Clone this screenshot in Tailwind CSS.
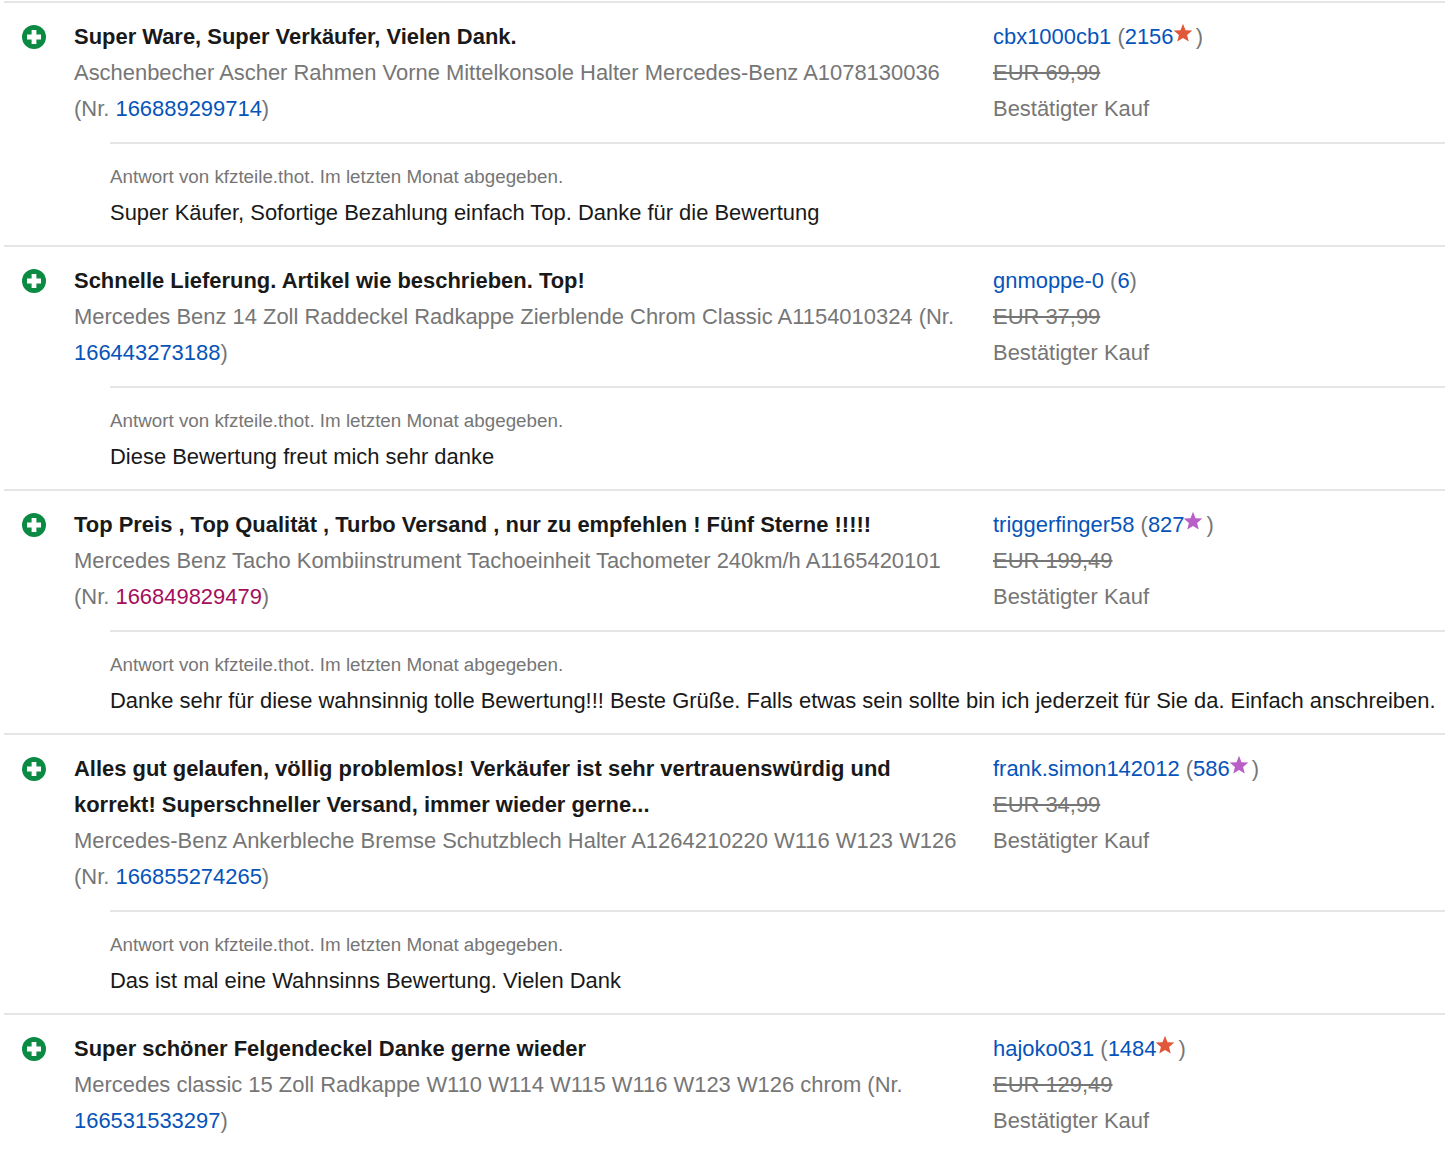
<!DOCTYPE html>
<html>
<head>
<meta charset="utf-8">
<script src="https://cdn.jsdelivr.net/npm/@tailwindcss/browser@4"></script>
</head>
<body class="bg-white">
<div class="pl-1 pt-[1px] font-['Liberation_Sans',Arial,sans-serif] text-[21.95px] leading-[36px] text-[#767676] overflow-hidden h-[1153px]">

<section class="border-t-2 border-[#e5e5e5] pt-4">
  <div class="flex">
    <div class="w-[70px] shrink-0 pl-[18px] pt-[6px]">
      <svg class="w-6 h-6" viewBox="0 0 24 24"><circle cx="12" cy="12" r="12" fill="#0a8a43"/><path d="M9.6 5h4.8v4.6H19v4.8h-4.6V19H9.6v-4.6H5V9.6h4.600z" fill="#fff"/></svg>
    </div>
    <div class="w-[893px] shrink-0 pr-2">
      <div class="font-bold text-[#191919]">Super Ware, Super Verkäufer, Vielen Dank.</div>
      <div>Aschenbecher Ascher Rahmen Vorne Mittelkonsole Halter Mercedes-Benz A1078130036 (Nr.&nbsp;<a class="text-[#0654ba]">166889299714</a>)</div>
    </div>
    <div class="flex-1 min-w-0 whitespace-nowrap pl-[26px]">
      <div><a class="text-[#0654ba]">cbx1000cb1</a> (<a class="text-[#0654ba]">2156</a><svg class="inline-block align-top w-5 h-5 mt-1 -ml-px -mr-[3px]" viewBox="0 0 24 24"><path d="M12 1l3 7.6 8.2.5-6.3 5.2 2 8L12 17.900l-6.900 4.400 2-8L.8 9.100 9 8.600z" fill="#e0573a"/></svg> )</div>
      <div class="line-through">EUR 69,99</div>
      <div>Bestätigter Kauf</div>
    </div>
  </div>
  <div class="ml-[106px] mt-[15px] border-t-2 border-[#e5e5e5] pt-[15px] pb-[14px]">
    <div class="text-[18.8px]">Antwort von kfzteile.thot. Im letzten Monat abgegeben.</div>
    <div class="text-[#191919] whitespace-nowrap">Super Käufer, Sofortige Bezahlung einfach Top. Danke für die Bewertung</div>
  </div>
</section>

<section class="border-t-2 border-[#e5e5e5] pt-4">
  <div class="flex">
    <div class="w-[70px] shrink-0 pl-[18px] pt-[6px]">
      <svg class="w-6 h-6" viewBox="0 0 24 24"><circle cx="12" cy="12" r="12" fill="#0a8a43"/><path d="M9.6 5h4.8v4.6H19v4.8h-4.6V19H9.6v-4.6H5V9.6h4.600z" fill="#fff"/></svg>
    </div>
    <div class="w-[893px] shrink-0 pr-2">
      <div class="font-bold text-[#191919]">Schnelle Lieferung. Artikel wie beschrieben. Top!</div>
      <div>Mercedes Benz 14 Zoll Raddeckel Radkappe Zierblende Chrom Classic A1154010324 (Nr. <a class="text-[#0654ba]">166443273188</a>)</div>
    </div>
    <div class="flex-1 min-w-0 whitespace-nowrap pl-[26px]">
      <div><a class="text-[#0654ba]">gnmoppe-0</a> (<a class="text-[#0654ba]">6</a>)</div>
      <div class="line-through">EUR 37,99</div>
      <div>Bestätigter Kauf</div>
    </div>
  </div>
  <div class="ml-[106px] mt-[15px] border-t-2 border-[#e5e5e5] pt-[15px] pb-[14px]">
    <div class="text-[18.8px]">Antwort von kfzteile.thot. Im letzten Monat abgegeben.</div>
    <div class="text-[#191919] whitespace-nowrap">Diese Bewertung freut mich sehr danke</div>
  </div>
</section>

<section class="border-t-2 border-[#e5e5e5] pt-4">
  <div class="flex">
    <div class="w-[70px] shrink-0 pl-[18px] pt-[6px]">
      <svg class="w-6 h-6" viewBox="0 0 24 24"><circle cx="12" cy="12" r="12" fill="#0a8a43"/><path d="M9.6 5h4.8v4.6H19v4.8h-4.6V19H9.6v-4.6H5V9.6h4.600z" fill="#fff"/></svg>
    </div>
    <div class="w-[893px] shrink-0 pr-2">
      <div class="font-bold text-[#191919]">Top Preis , Top Qualität , Turbo Versand , nur zu empfehlen ! Fünf Sterne !!!!!</div>
      <div>Mercedes Benz Tacho Kombiinstrument Tachoeinheit Tachometer 240km/h A1165420101 (Nr.&nbsp;<a class="text-[#a50e5b]">166849829479</a>)</div>
    </div>
    <div class="flex-1 min-w-0 whitespace-nowrap pl-[26px]">
      <div><a class="text-[#0654ba]">triggerfinger58</a> (<a class="text-[#0654ba]">827</a><svg class="inline-block align-top w-5 h-5 mt-1 -ml-px -mr-[3px]" viewBox="0 0 24 24"><path d="M12 1l3 7.6 8.2.5-6.3 5.2 2 8L12 17.900l-6.900 4.400 2-8L.8 9.100 9 8.600z" fill="#b960c8"/></svg> )</div>
      <div class="line-through">EUR 199,49</div>
      <div>Bestätigter Kauf</div>
    </div>
  </div>
  <div class="ml-[106px] mt-[15px] border-t-2 border-[#e5e5e5] pt-[15px] pb-[14px]">
    <div class="text-[18.8px]">Antwort von kfzteile.thot. Im letzten Monat abgegeben.</div>
    <div class="text-[#191919] whitespace-nowrap">Danke sehr für diese wahnsinnig tolle Bewertung!!! Beste Grüße. Falls etwas sein sollte bin ich jederzeit für Sie da. Einfach anschreiben.</div>
  </div>
</section>

<section class="border-t-2 border-[#e5e5e5] pt-4">
  <div class="flex">
    <div class="w-[70px] shrink-0 pl-[18px] pt-[6px]">
      <svg class="w-6 h-6" viewBox="0 0 24 24"><circle cx="12" cy="12" r="12" fill="#0a8a43"/><path d="M9.6 5h4.8v4.6H19v4.8h-4.6V19H9.6v-4.6H5V9.6h4.600z" fill="#fff"/></svg>
    </div>
    <div class="w-[893px] shrink-0 pr-2">
      <div class="font-bold text-[#191919]">Alles gut gelaufen, völlig problemlos! Verkäufer ist sehr vertrauenswürdig und korrekt! Superschneller Versand, immer wieder gerne...</div>
      <div>Mercedes-Benz Ankerbleche Bremse Schutzblech Halter A1264210220 W116 W123 W126 (Nr.&nbsp;<a class="text-[#0654ba]">166855274265</a>)</div>
    </div>
    <div class="flex-1 min-w-0 whitespace-nowrap pl-[26px]">
      <div><a class="text-[#0654ba]">frank.simon142012</a> (<a class="text-[#0654ba]">586</a><svg class="inline-block align-top w-5 h-5 mt-1 -ml-px -mr-[3px]" viewBox="0 0 24 24"><path d="M12 1l3 7.6 8.2.5-6.3 5.2 2 8L12 17.900l-6.900 4.400 2-8L.8 9.100 9 8.600z" fill="#b960c8"/></svg> )</div>
      <div class="line-through">EUR 34,99</div>
      <div>Bestätigter Kauf</div>
    </div>
  </div>
  <div class="ml-[106px] mt-[15px] border-t-2 border-[#e5e5e5] pt-[15px] pb-[14px]">
    <div class="text-[18.8px]">Antwort von kfzteile.thot. Im letzten Monat abgegeben.</div>
    <div class="text-[#191919] whitespace-nowrap">Das ist mal eine Wahnsinns Bewertung. Vielen Dank</div>
  </div>
</section>

<section class="border-t-2 border-[#e5e5e5] pt-4">
  <div class="flex">
    <div class="w-[70px] shrink-0 pl-[18px] pt-[6px]">
      <svg class="w-6 h-6" viewBox="0 0 24 24"><circle cx="12" cy="12" r="12" fill="#0a8a43"/><path d="M9.6 5h4.8v4.6H19v4.8h-4.6V19H9.6v-4.6H5V9.6h4.600z" fill="#fff"/></svg>
    </div>
    <div class="w-[893px] shrink-0 pr-2">
      <div class="font-bold text-[#191919]">Super schöner Felgendeckel Danke gerne wieder</div>
      <div>Mercedes classic 15 Zoll Radkappe W110 W114 W115 W116 W123 W126 chrom (Nr. <a class="text-[#0654ba]">166531533297</a>)</div>
    </div>
    <div class="flex-1 min-w-0 whitespace-nowrap pl-[26px]">
      <div><a class="text-[#0654ba]">hajoko031</a> (<a class="text-[#0654ba]">1484</a><svg class="inline-block align-top w-5 h-5 mt-1 -ml-px -mr-[3px]" viewBox="0 0 24 24"><path d="M12 1l3 7.6 8.2.5-6.3 5.2 2 8L12 17.900l-6.900 4.400 2-8L.8 9.100 9 8.600z" fill="#e0573a"/></svg> )</div>
      <div class="line-through">EUR 129,49</div>
      <div>Bestätigter Kauf</div>
    </div>
  </div>
</section>

</div>
</body>
</html>
